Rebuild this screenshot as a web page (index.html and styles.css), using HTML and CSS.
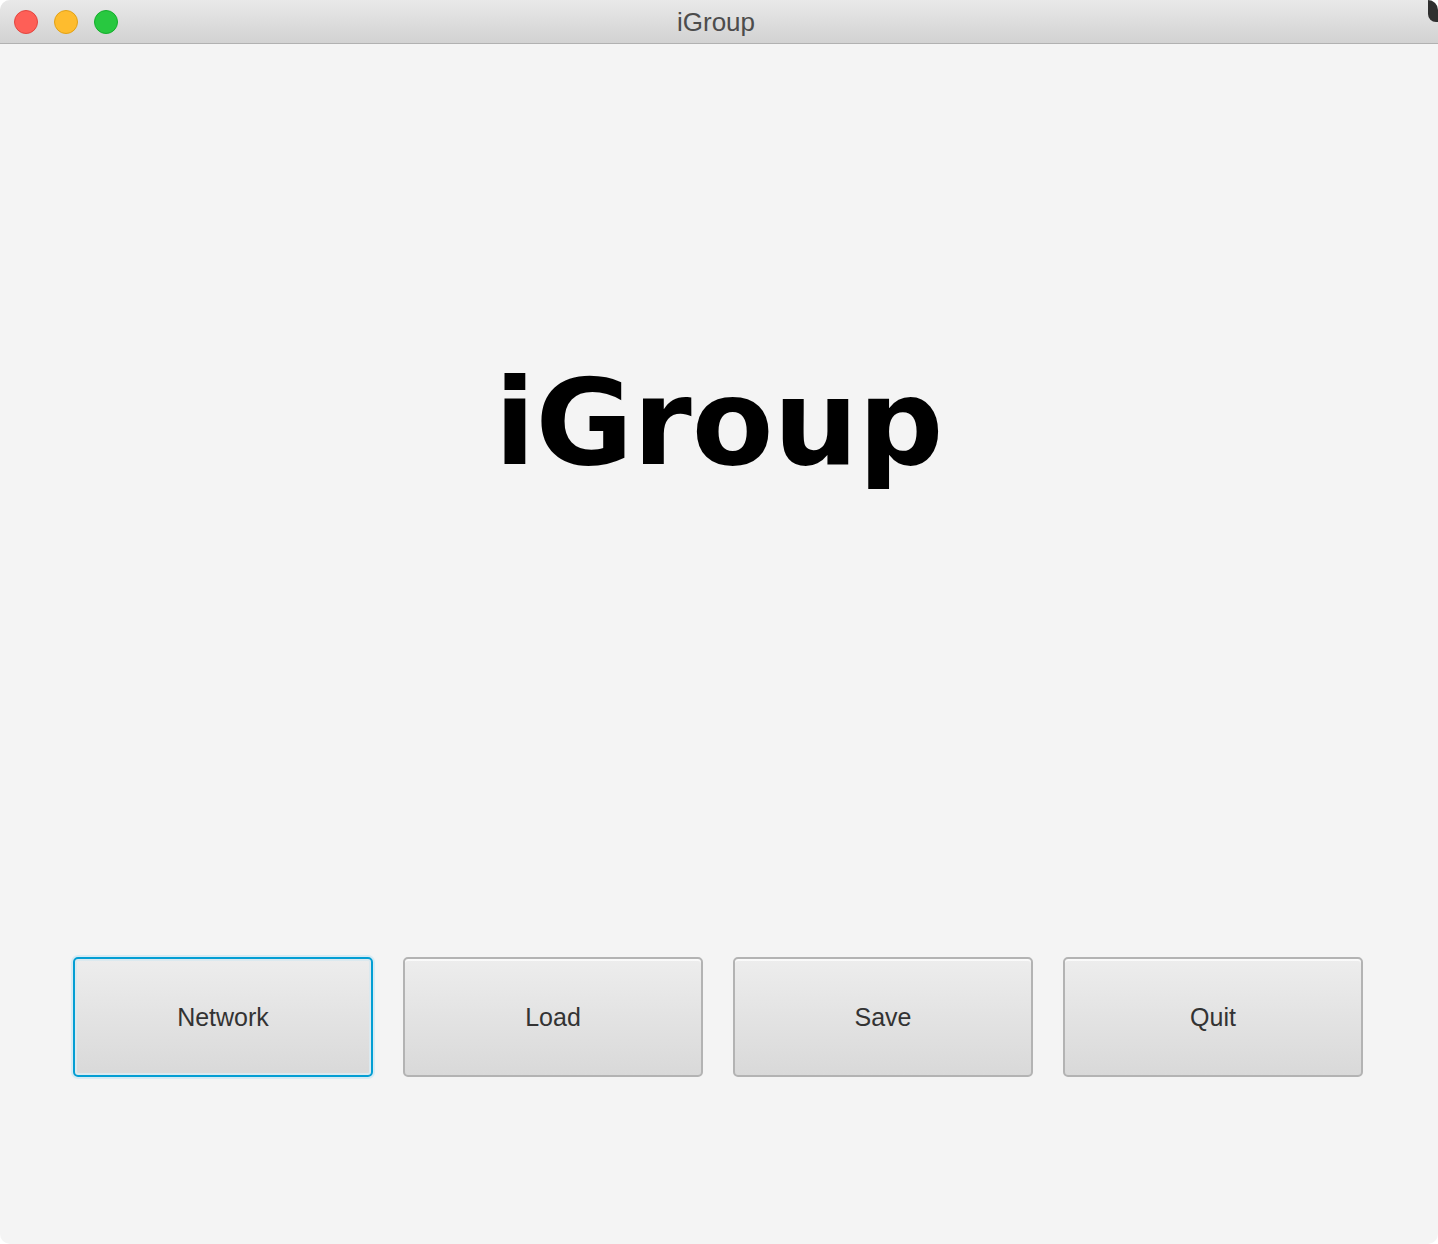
FILE: index.html
```html
<!DOCTYPE html>
<html>
<head>
<meta charset="utf-8">
<link rel="stylesheet" href="styles.css">
</head>
<body>
<div class="window">
  <div class="titlebar">
    <div class="lights">
      <span class="light red"></span>
      <span class="light yellow"></span>
      <span class="light green"></span>
    </div>
    <div class="wintitle">iGroup</div>
  </div>
  <div class="content">
    <h1 class="hero">iGroup</h1>
    <div class="buttons">
      <button class="btn focused">Network</button>
      <button class="btn">Load</button>
      <button class="btn">Save</button>
      <button class="btn">Quit</button>
    </div>
  </div>
  <div class="behind"></div>
</div>
</body>
</html>
```

FILE: styles.css
```css
html, body {
  margin: 0;
  padding: 0;
  background: #ffffff;
}
.window {
  position: relative;
  width: 1438px;
  height: 1244px;
  background: #f4f4f4;
  border-radius: 10px;
  overflow: hidden;
  display: flex;
  flex-direction: column;
}
.titlebar {
  position: relative;
  height: 43px;
  flex: none;
  background: linear-gradient(#e9e9e9, #d2d2d2);
  border-bottom: 1px solid #b1b1b1;
  display: flex;
  align-items: center;
  justify-content: center;
}
.lights {
  position: absolute;
  left: 14px;
  top: 10px;
  display: flex;
  gap: 16px;
}
.light {
  width: 24px;
  height: 24px;
  border-radius: 50%;
  box-sizing: border-box;
}
.red { background: #fe5f57; border: 1px solid #e2463f; }
.yellow { background: #febc2e; border: 1px solid #e1a116; }
.green { background: #28c840; border: 1px solid #14ae2c; }
.wintitle {
  font-family: "Liberation Sans", Arial, sans-serif;
  font-size: 26px;
  color: #4c4c4c;
  margin-left: -6px;
  margin-top: 2px;
}
.content {
  flex: 1;
  display: flex;
  flex-direction: column;
}
.hero {
  margin: 0;
  padding-top: 320px;
  font-family: "DejaVu Sans", Verdana, sans-serif;
  font-weight: bold;
  font-size: 119px;
  line-height: 119px;
  text-align: center;
  color: #000;
}
.buttons {
  margin-top: 474px;
  padding-left: 73px;
  display: flex;
  gap: 30px;
}
.btn {
  width: 300px;
  height: 120px;
  box-sizing: border-box;
  border: 2px solid #b3b3b3;
  border-radius: 5px;
  background: linear-gradient(#ededed, #d9d9d9);
  font-family: "Liberation Sans", Arial, sans-serif;
  font-size: 25px;
  color: #333333;
  padding: 0;
  box-shadow: inset 0 2px 0 rgba(255,255,255,0.7);
}
.btn.focused {
  border: 2px solid #039ed3;
  box-shadow: 0 0 0 2px #d6ebf4, inset 0 0 0 2px #dbe9ef;
}
.behind {
  position: absolute;
  right: -12px;
  top: -10px;
  width: 22px;
  height: 32px;
  background: #2f2f2f;
  border-radius: 8px;
}
```
